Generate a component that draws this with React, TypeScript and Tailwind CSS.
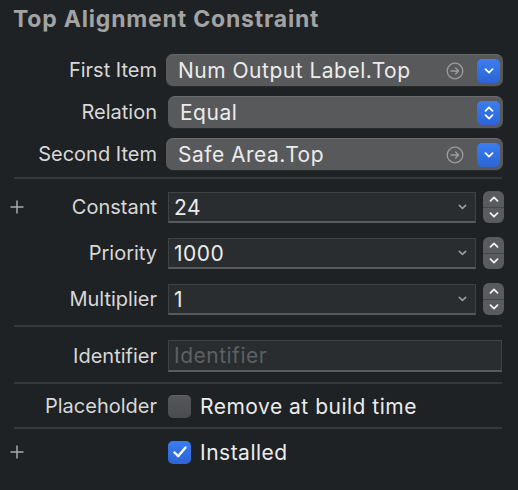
import React from "react";

const FONT = { fontFamily: "Inter, 'Noto Sans', sans-serif" };

function ChevDown({ className = "", color = "#fff" }: { className?: string; color?: string }) {
  return (
    <svg viewBox="0 0 10 6" className={className} fill="none">
      <path d="M1.5 1.2 L5 4.6 L8.5 1.2" stroke={color} strokeWidth="1.8" strokeLinecap="round" strokeLinejoin="round" />
    </svg>
  );
}

function ChevUp({ className = "", color = "#fff" }: { className?: string; color?: string }) {
  return (
    <svg viewBox="0 0 10 6" className={className} fill="none">
      <path d="M1.5 4.8 L5 1.4 L8.5 4.8" stroke={color} strokeWidth="1.8" strokeLinecap="round" strokeLinejoin="round" />
    </svg>
  );
}

function CircleArrow() {
  return (
    <svg width="18" height="18" viewBox="0 0 18 18" fill="none">
      <circle cx="9" cy="9" r="7.8" stroke="#9c9d9f" strokeWidth="1.3" />
      <path d="M5 9 H12.6 M9.6 6 L12.6 9 L9.6 12" stroke="#9c9d9f" strokeWidth="1.3" strokeLinecap="round" strokeLinejoin="round" />
    </svg>
  );
}

function Label({ children }: { children: React.ReactNode }) {
  return (
    <div className="w-[157px] shrink-0 text-right text-[20px] text-[#d8d8d8] leading-none whitespace-nowrap">{children}</div>
  );
}

const VALUE = "text-[21px] tracking-[0.5px] text-[#ececec] leading-none whitespace-nowrap";

function Popup({ text, ml = "ml-[9px]", w = "w-[337px]", double = false, arrow = true }: { text: string; ml?: string; w?: string; double?: boolean; arrow?: boolean }) {
  return (
    <div className={`${ml} ${w} h-[32px] rounded-[7px] bg-[#58595b] border-t border-[#6a6b6d] shadow-[0_1px_0_#2a2b2c] flex items-center pl-[12px] pr-[3px]`}>
      <span className={`flex-1 ${VALUE}`}>{text}</span>
      {arrow && (
        <span className="mr-[13px] flex items-center">
          <CircleArrow />
        </span>
      )}
      <div className="w-[23px] h-[24px] rounded-[5px] bg-gradient-to-b from-[#3b7ef0] to-[#2c64d6] flex flex-col items-center justify-center gap-[2px]">
        {double ? (
          <>
            <ChevUp className="w-[10px] h-[6px]" />
            <ChevDown className="w-[10px] h-[6px]" />
          </>
        ) : (
          <ChevDown className="w-[10px] h-[6px]" />
        )}
      </div>
    </div>
  );
}

function Stepper() {
  return (
    <div className="ml-[7px] w-[21px] h-[32px] rounded-[6px] bg-[#595b5e] flex flex-col overflow-hidden">
      <div className="flex-1 flex items-center justify-center border-b border-[#45474a]">
        <ChevUp className="w-[10px] h-[6px]" color="#f0f0f0" />
      </div>
      <div className="flex-1 flex items-center justify-center">
        <ChevDown className="w-[10px] h-[6px]" color="#f0f0f0" />
      </div>
    </div>
  );
}

function Combo({ value }: { value: string }) {
  return (
    <div className="ml-[11px] flex items-center h-[32px]">
      <div className="w-[308px] h-[31px] mt-[1px] bg-[#2a2d2f] border border-[#3f4244] border-b-[#585b5d] border-b-2 flex items-center pl-[5px] pr-[8px]">
        <span className={`flex-1 ${VALUE}`}>{value}</span>
        <ChevDown className="w-[9px] h-[6px]" color="#9a9b9d" />
      </div>
      <Stepper />
    </div>
  );
}

function Plus() {
  return (
    <svg width="14" height="14" viewBox="0 0 14 14" className="absolute left-[10px]">
      <path d="M7 0.5 V13.5 M0.5 7 H13.5" stroke="#a8a9ab" strokeWidth="1.5" />
    </svg>
  );
}

function Sep({ mt }: { mt: string }) {
  return <div className={`${mt} ml-[14px] w-[488px] h-[2px] bg-[#36393b]`} />;
}

export default function App() {
  return (
    <div className="w-[518px] h-[490px] bg-[#1f2224] overflow-hidden" style={FONT}>
      <div className="h-[38px] pl-[13px] flex items-center">
        <span className="text-[23px] font-bold tracking-[0.8px] text-[#a3a3a3] leading-none whitespace-nowrap">Top Alignment Constraint</span>
      </div>

      <div className="mt-[16px] h-[32px] flex items-center">
        <Label>First Item</Label>
        <Popup text="Num Output Label.Top" />
      </div>
      <div className="mt-[10px] h-[32px] flex items-center">
        <Label>Relation</Label>
        <Popup text="Equal" ml="ml-[11px]" w="w-[335px]" double arrow={false} />
      </div>
      <div className="mt-[10px] h-[32px] flex items-center">
        <Label>Second Item</Label>
        <Popup text="Safe Area.Top" />
      </div>

      <Sep mt="mt-[7px]" />

      <div className="relative mt-[12px] h-[32px] flex items-center">
        <Plus />
        <Label>Constant</Label>
        <Combo value="24" />
      </div>
      <div className="mt-[14px] h-[32px] flex items-center">
        <Label>Priority</Label>
        <Combo value="1000" />
      </div>
      <div className="mt-[14px] h-[32px] flex items-center">
        <Label>Multiplier</Label>
        <Combo value="1" />
      </div>

      <Sep mt="mt-[10px]" />

      <div className="mt-[13px] h-[32px] flex items-center">
        <Label>Identifier</Label>
        <div className="ml-[11px] w-[334px] h-[32px] bg-[#2a2d2f] border border-[#3f4244] border-b-[#585b5d] border-b-2 flex items-center pl-[5px]">
          <span className="text-[21px] tracking-[0.5px] text-[#5d6063] leading-none">Identifier</span>
        </div>
      </div>

      <Sep mt="mt-[10px]" />

      <div className="mt-[10px] h-[24px] flex items-center">
        <Label>Placeholder</Label>
        <div className="ml-[11px] w-[23px] h-[23px] rounded-[5px] bg-gradient-to-b from-[#55575a] to-[#4a4c4f] border-t border-[#606265]" />
        <span className={`ml-[9px] ${VALUE}`}>Remove at build time</span>
      </div>

      <Sep mt="mt-[9px]" />

      <div className="relative mt-[11px] h-[24px] flex items-center">
        <Plus />
        <div className="w-[157px] shrink-0" />
        <div className="ml-[11px] w-[23px] h-[23px] rounded-[5px] bg-gradient-to-b from-[#3b7ef0] to-[#2c64d6] flex items-center justify-center">
          <svg width="16" height="14" viewBox="0 0 16 14" fill="none">
            <path d="M2.5 7.5 L6.2 11.2 L13.5 2.5" stroke="#fff" strokeWidth="2.4" strokeLinecap="round" strokeLinejoin="round" />
          </svg>
        </div>
        <span className={`ml-[9px] ${VALUE}`}>Installed</span>
      </div>
    </div>
  );
}
